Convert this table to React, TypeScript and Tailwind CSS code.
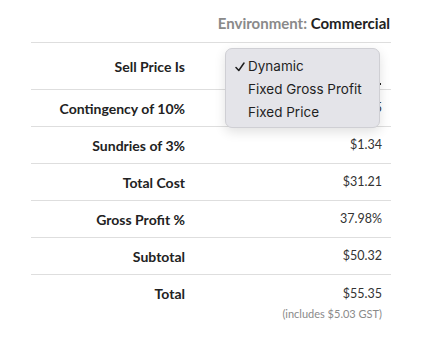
import React from 'react';

const ROWS = [
  { label: 'Contingency of 10%', value: '$2.65' },
  { label: 'Sundries of 3%', value: '$1.34' },
  { label: 'Total Cost', value: '$31.21' },
  { label: 'Gross Profit %', value: '37.98%' },
  { label: 'Subtotal', value: '$50.32' },
];

const OPTIONS = ['Dynamic', 'Fixed Gross Profit', 'Fixed Price'];

export default function App() {
  return (
    <div className="relative w-[430px] h-[362px] bg-white font-['Lato',sans-serif] text-[#222]">
      <div className="pt-[14px] pr-[40px] text-right text-[15px] font-bold leading-[18px]">
        <span className="text-[#8a8a8a]">Environment:</span> Commercial
      </div>

      <div className="ml-[31px] mt-[10px] w-[360px]">
        {/* Sell price row, select sits under the open menu */}
        <div className="flex items-center h-[47px] border-t border-[#dedede]">
          <div className="w-[154px] text-right text-[14px] font-bold">Sell Price Is</div>
          <div className="flex-1 flex justify-end pr-[10px]">
            <div className="w-[150px] h-[24px] mt-[14px] border-b-2 border-[#222]" />
          </div>
        </div>

        {ROWS.map((r) => (
          <div key={r.label} className="flex items-center h-[37px] border-t border-[#dedede]">
            <div className="w-[154px] text-right text-[14px] font-bold">{r.label}</div>
            <div className="flex-1 text-right pr-[9px] text-[12.5px] text-[#333]">{r.value}</div>
          </div>
        ))}

        <div className="flex border-t border-[#dedede] pt-[11px]">
          <div className="w-[154px] text-right text-[14px] font-bold leading-[16px]">Total</div>
          <div className="flex-1 text-right pr-[9px]">
            <div className="text-[12.5px] leading-[16px] text-[#333]">$55.35</div>
            <div className="mt-[5px] text-[11px] leading-[14px] text-[#8a8a8a]">(includes $5.03 GST)</div>
          </div>
        </div>
      </div>

      {/* open select menu */}
      <div className="absolute left-[225px] top-[48px] w-[155px] h-[80px] py-[6px] rounded-[7px] bg-[#e4e4e9] border border-[#cfcfd4] shadow-[0_4px_12px_rgba(0,0,0,0.12)] font-['Inter',sans-serif] text-[13.5px] text-[#1f1f1f]">
        {OPTIONS.map((o, i) => (
          <div key={o} className="flex items-center h-[23px]">
            <span className="w-[22px] pl-[9px] flex items-center">
              {i === 0 && (
                <svg width="10" height="10" viewBox="0 0 10 10" fill="none" stroke="#1f1f1f" strokeWidth="1.5" strokeLinecap="round" strokeLinejoin="round">
                  <path d="M1 5.5l2.8 3L9 1" />
                </svg>
              )}
            </span>
            <span>{o}</span>
          </div>
        ))}
      </div>
    </div>
  );
}
